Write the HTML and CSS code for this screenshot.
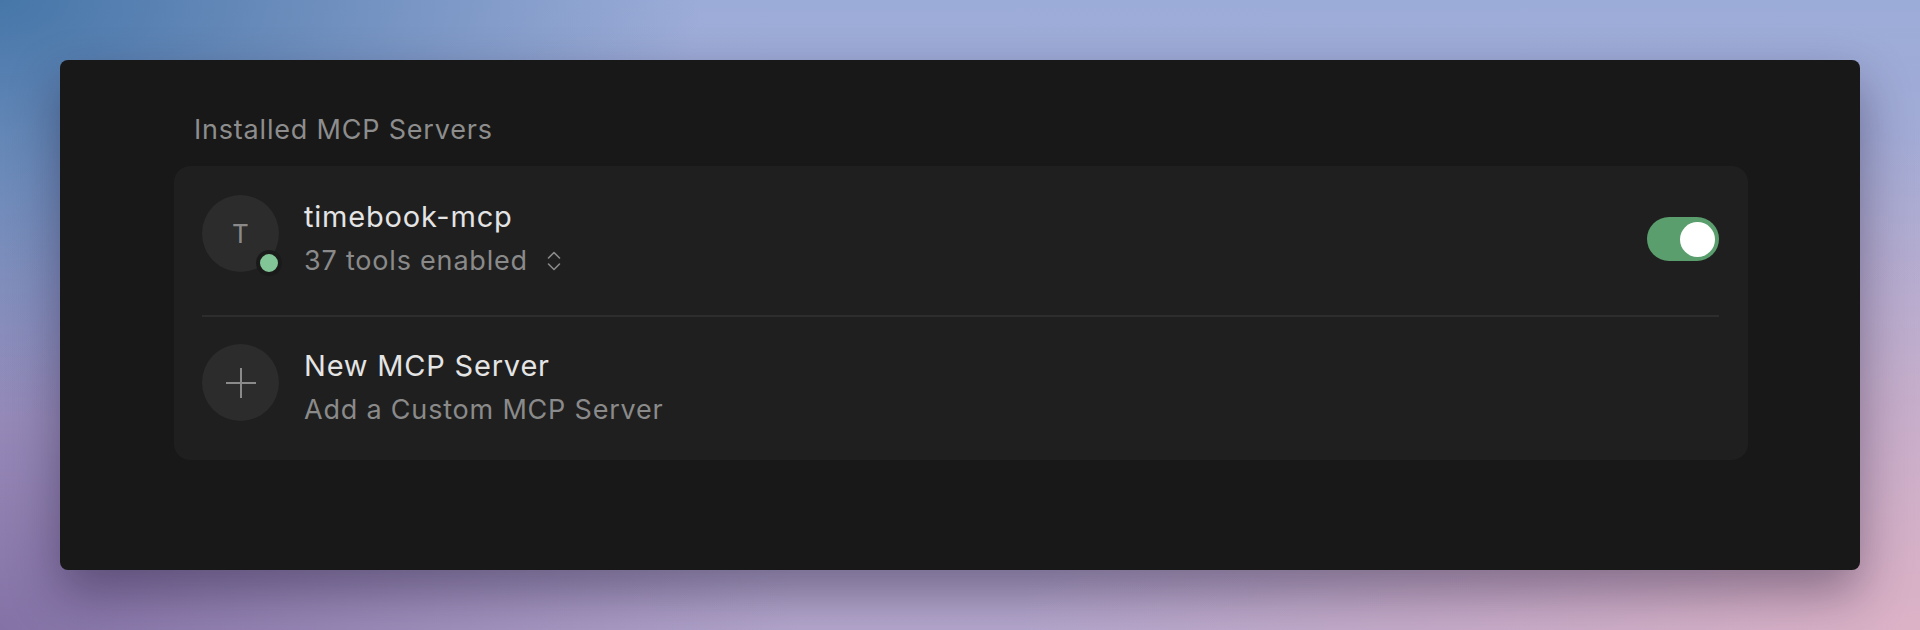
FILE: index.html
```html
<!DOCTYPE html>
<html lang="en">
<head>
<meta charset="utf-8">
<title>Installed MCP Servers</title>
<link rel="stylesheet" href="styles.css">
</head>
<body>
<div class="panel">
  <div class="section-title">Installed MCP Servers</div>
  <div class="card">
    <div class="row row-first">
      <div class="avatar">
        <span class="avatar-letter">T</span>
        <span class="status-dot"></span>
      </div>
      <div class="text">
        <div class="title">timebook-mcp</div>
        <div class="subtitle">37 tools enabled
          <svg class="chevrons" width="14" height="20" viewBox="0 0 14 20" fill="none" stroke="#8a8a8a" stroke-width="1.6" stroke-linecap="round" stroke-linejoin="round"><polyline points="1.5,7 7,1.5 12.5,7"/><polyline points="1.5,13 7,18.5 12.5,13"/></svg>
        </div>
      </div>
      <div class="toggle"><span class="knob"></span></div>
    </div>
    <div class="divider"></div>
    <div class="row row-second">
      <div class="avatar">
        <svg class="plus" width="30" height="30" viewBox="0 0 30 30" fill="none" stroke="#8a8a8a" stroke-width="2"><line x1="15" y1="0" x2="15" y2="30"/><line x1="0" y1="15" x2="30" y2="15"/></svg>
      </div>
      <div class="text">
        <div class="title">New MCP Server</div>
        <div class="subtitle">Add a Custom MCP Server</div>
      </div>
    </div>
  </div>
</div>
</body>
</html>
```

FILE: styles.css
```css
html, body {
  margin: 0;
  padding: 0;
}
body {
  width: 1920px;
  height: 630px;
  overflow: hidden;
  font-family: Inter, "Noto Sans", sans-serif;
  background:
    radial-gradient(ellipse 700px 420px at 0% 0%, #4676a8 0%, rgba(70,118,168,0) 100%),
    radial-gradient(ellipse 900px 500px at 100% 100%, #dcb2c6 0%, rgba(220,178,198,0) 100%),
    radial-gradient(ellipse 800px 500px at 0% 100%, #8472a6 0%, rgba(132,114,166,0) 100%),
    linear-gradient(180deg, #9cacd8 0%, #b4a6cc 100%);
  padding-top: 60px;
  box-sizing: border-box;
}
.panel {
  width: 1800px;
  height: 510px;
  margin: 0 auto;
  background: #181818;
  border-radius: 8px;
  box-shadow: 0 22px 50px rgba(20, 10, 40, 0.4);
  box-sizing: border-box;
  padding: 54px 112px 0 114px;
}
.section-title {
  font-size: 27px;
  line-height: 32px;
  letter-spacing: 0.8px;
  color: #8d8d8d;
  padding-left: 20px;
  margin-bottom: 20px;
}
.card {
  background: #1f1f1f;
  border-radius: 16px;
  padding: 0 29px 0 28px;
}
.row {
  display: flex;
  align-items: flex-start;
  gap: 25px;
}
.row-first {
  padding: 29px 0 32px;
}
.row-second {
  padding: 27px 0 28px;
}
.divider {
  height: 2px;
  background: #2d2d2d;
}
.avatar {
  position: relative;
  width: 77px;
  height: 77px;
  border-radius: 50%;
  background: #2c2c2c;
  display: flex;
  align-items: center;
  justify-content: center;
  flex-shrink: 0;
}
.avatar-letter {
  font-size: 26px;
  color: #8a8a8a;
}
.status-dot {
  position: absolute;
  right: -3px;
  bottom: -4px;
  width: 18px;
  height: 18px;
  border-radius: 50%;
  background: #82c596;
  border: 4px solid #1a1a1a;
}
.text {
  flex: 1;
}
.title {
  font-size: 29px;
  line-height: 44px;
  letter-spacing: 0.8px;
  color: #e4e4e4;
}
.subtitle {
  font-size: 27px;
  line-height: 44px;
  letter-spacing: 0.8px;
  color: #8a8a8a;
  display: flex;
  align-items: center;
  gap: 19px;
}
.chevrons {
  display: block;
}
.toggle {
  align-self: center;
  width: 72px;
  height: 44px;
  border-radius: 22px;
  background: #5a9e6e;
  display: flex;
  align-items: center;
  justify-content: flex-end;
  padding: 0 4px;
  box-sizing: border-box;
}
.knob {
  width: 35px;
  height: 35px;
  border-radius: 50%;
  background: #ffffff;
}
```
